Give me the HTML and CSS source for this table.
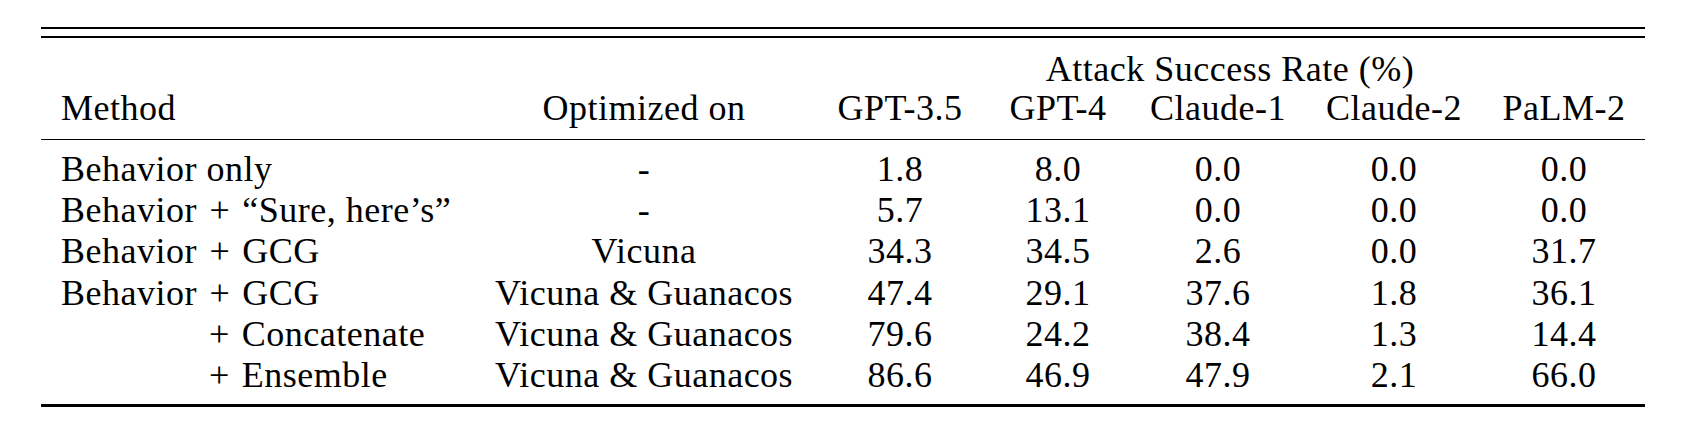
FILE: index.html
```html
<!DOCTYPE html>
<html lang="en">
<head>
<meta charset="utf-8">
<title>Attack Success Rate</title>
<link rel="stylesheet" href="styles.css">
</head>
<body>
<div class="page">
  <div class="toprule">
    <table class="results">
      <colgroup>
        <col class="c-method">
        <col class="c-opt">
        <col class="c-gpt35">
        <col class="c-gpt4">
        <col class="c-cl1">
        <col class="c-cl2">
        <col class="c-palm">
      </colgroup>
      <thead>
        <tr class="group-row">
          <th></th>
          <th></th>
          <th colspan="5" class="group">Attack Success Rate (%)</th>
        </tr>
        <tr class="label-row">
          <th class="method">Method</th>
          <th>Optimized on</th>
          <th>GPT-3.5</th>
          <th>GPT-4</th>
          <th>Claude-1</th>
          <th>Claude-2</th>
          <th>PaLM-2</th>
        </tr>
      </thead>
      <tbody>
        <tr class="first">
          <td class="method">Behavior only</td>
          <td>-</td>
          <td>1.8</td><td>8.0</td><td>0.0</td><td>0.0</td><td>0.0</td>
        </tr>
        <tr>
          <td class="method">Behavior <span class="plus">+</span> “Sure, here’s”</td>
          <td>-</td>
          <td>5.7</td><td>13.1</td><td>0.0</td><td>0.0</td><td>0.0</td>
        </tr>
        <tr>
          <td class="method">Behavior <span class="plus">+</span> GCG</td>
          <td>Vicuna</td>
          <td>34.3</td><td>34.5</td><td>2.6</td><td>0.0</td><td>31.7</td>
        </tr>
        <tr>
          <td class="method">Behavior <span class="plus">+</span> GCG</td>
          <td>Vicuna &amp; Guanacos</td>
          <td>47.4</td><td>29.1</td><td>37.6</td><td>1.8</td><td>36.1</td>
        </tr>
        <tr>
          <td class="method indent"><span class="plus">+</span> Concatenate</td>
          <td>Vicuna &amp; Guanacos</td>
          <td>79.6</td><td>24.2</td><td>38.4</td><td>1.3</td><td>14.4</td>
        </tr>
        <tr class="last">
          <td class="method indent"><span class="plus">+</span> Ensemble</td>
          <td>Vicuna &amp; Guanacos</td>
          <td>86.6</td><td>46.9</td><td>47.9</td><td>2.1</td><td>66.0</td>
        </tr>
      </tbody>
    </table>
  </div>
</div>
</body>
</html>
```

FILE: styles.css
```css
html, body {
  margin: 0;
  padding: 0;
  background: #ffffff;
}

body {
  font-family: "Liberation Serif", "Times New Roman", serif;
  font-size: 36px;
  letter-spacing: 0.5px;
  color: #000000;
}

.page {
  padding: 27px 0 0 41px;
}

.toprule {
  width: 1604px;
  border-top: 2px solid #000;
  padding-top: 7px;
}

.results {
  width: 1604px;
  table-layout: fixed;
  border-collapse: separate;
  border-spacing: 0;
  border-top: 2px solid #000;
  border-bottom: 3px solid #000;
}

.c-method { width: 432px; }
.c-opt { width: 342px; }
.c-gpt35 { width: 170px; }
.c-gpt4 { width: 146px; }
.c-cl1 { width: 174px; }
.c-cl2 { width: 178px; }
.c-palm { width: 162px; }

.results th,
.results td {
  padding: 0;
  font-weight: normal;
  text-align: center;
  white-space: nowrap;
  line-height: 41.2px;
}

.results .method {
  text-align: left;
  padding-left: 20px;
}

.results .indent {
  padding-left: 165px;
}

.plus {
  letter-spacing: 0;
  margin: 0 3px;
}

.group-row th {
  line-height: 38px;
  padding-top: 12px;
}

.label-row th {
  line-height: 41px;
  padding-bottom: 10px;
  border-bottom: 1px solid #000;
}

.results tr.first td {
  padding-top: 9px;
}

.results tr.last td {
  padding-bottom: 8px;
}
```
